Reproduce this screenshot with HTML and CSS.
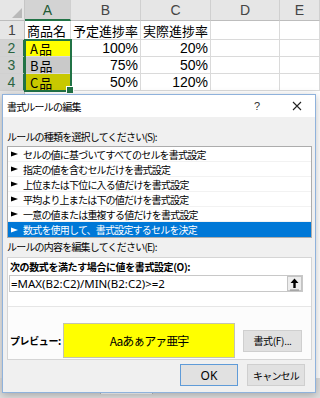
FILE: index.html
```html
<!DOCTYPE html>
<html lang="ja">
<head>
  <meta charset="UTF-8">
  <title>書式ルールの編集</title>
  <link rel="stylesheet" href="styles.css">
</head>
<body>
  <div class="screen">
    <div class="sheet">
      <div class="corner"></div>
      <div class="ch ch-sel">A</div>
      <div class="ch">B</div>
      <div class="ch">C</div>
      <div class="ch">D</div>
      <div class="ch">E</div>

      <div class="rh">1</div>
      <div class="c">商品名</div>
      <div class="c">予定進捗率</div>
      <div class="c">実際進捗率</div>
      <div class="c"></div>
      <div class="c"></div>

      <div class="rh rh-sel">2</div>
      <div class="c yellow">A品</div>
      <div class="c num">100%</div>
      <div class="c num">20%</div>
      <div class="c"></div>
      <div class="c"></div>

      <div class="rh rh-sel">3</div>
      <div class="c gray">B品</div>
      <div class="c num">75%</div>
      <div class="c num">50%</div>
      <div class="c"></div>
      <div class="c"></div>

      <div class="rh rh-sel">4</div>
      <div class="c olive">C品</div>
      <div class="c num">50%</div>
      <div class="c num">120%</div>
      <div class="c"></div>
      <div class="c"></div>

      <div class="selection"></div>
    </div>
    <div class="sheet-rest"></div>
    <div class="tabs">
      <span class="tab">Sheet1</span>
      <span class="tab tab-on">Sheet2</span>
      <span class="tab-add">+</span>
    </div>

    <div class="dialog">
      <div class="titlebar">
        <span class="title">書式ルールの編集</span>
        <span class="help">?</span>
        <span class="close">
          <svg width="10" height="10" viewBox="0 0 10 10"><path d="M1 1L9 9M9 1L1 9" stroke="#222" stroke-width="1.1" fill="none"/></svg>
        </span>
      </div>
      <div class="body">
        <div class="label">ルールの種類を選択してください(S):</div>
        <div class="list">
          <div class="item"><svg class="arrow" width="7" height="6" viewBox="0 0 7 6"><polygon points="0,0.5 7,3 0,5.5"/></svg>セルの値に基づいてすべてのセルを書式設定</div>
          <div class="item"><svg class="arrow" width="7" height="6" viewBox="0 0 7 6"><polygon points="0,0.5 7,3 0,5.5"/></svg>指定の値を含むセルだけを書式設定</div>
          <div class="item"><svg class="arrow" width="7" height="6" viewBox="0 0 7 6"><polygon points="0,0.5 7,3 0,5.5"/></svg>上位または下位に入る値だけを書式設定</div>
          <div class="item"><svg class="arrow" width="7" height="6" viewBox="0 0 7 6"><polygon points="0,0.5 7,3 0,5.5"/></svg>平均より上または下の値だけを書式設定</div>
          <div class="item"><svg class="arrow" width="7" height="6" viewBox="0 0 7 6"><polygon points="0,0.5 7,3 0,5.5"/></svg>一意の値または重複する値だけを書式設定</div>
          <div class="item item-sel"><svg class="arrow" width="7" height="6" viewBox="0 0 7 6"><polygon points="0,0.5 7,3 0,5.5"/></svg>数式を使用して、書式設定するセルを決定</div>
        </div>

        <div class="label label2">ルールの内容を編集してください(E):</div>
        <div class="panel">
          <div class="panel-top">
            <div class="bold-label">次の数式を満たす場合に値を書式設定(O):</div>
            <div class="formula">
              <span class="formula-text">=MAX(B2:C2)/MIN(B2:C2)&gt;=2</span>
              <span class="collapse">
                <svg width="13" height="14" viewBox="0 0 13 14">
                  <path d="M6.5 1.5L2.5 6H5.3V11H7.7V6H10.5Z" fill="#000"/>
                  <path d="M2 13H11" stroke="#888" stroke-width="1"/>
                </svg>
              </span>
            </div>
          </div>
          <div class="panel-bottom">
            <div class="preview-row">
              <span class="bold-label preview-label">プレビュー:</span>
              <div class="preview">Aaあぁアァ亜宇</div>
              <button class="btn btn-format">書式(F)...</button>
            </div>
          </div>
        </div>

        <div class="buttons">
          <button class="btn btn-ok">OK</button>
          <button class="btn">キャンセル</button>
        </div>
      </div>
    </div>
  </div>
</body>
</html>
```

FILE: styles.css
```css
* { box-sizing: border-box; }
body { margin: 0; font-family: "Noto Sans CJK JP", sans-serif; color: #000; }

.screen { position: relative; width: 320px; height: 398px; overflow: hidden; background: #fff; display: flex; flex-direction: column; }

/* spreadsheet */
.sheet { position: relative; display: grid; grid-template-columns: 25px 46px 70px 70px 69px 40px; grid-template-rows: 21px 19px 17px 17px 17px; }
.corner { background: #e6e6e6; border-right: 1px solid #c6c6c6; border-bottom: 1px solid #bdbdbd; position: relative; }
.corner::after { content: ""; position: absolute; right: 2px; bottom: 2px; border-left: 10px solid transparent; border-bottom: 10px solid #b9b9b9; }
.ch { background: #e6e6e6; border-right: 1px solid #d0d0d0; border-bottom: 1px solid #bdbdbd; display: flex; align-items: center; justify-content: center; font-family: "Liberation Sans", sans-serif; font-size: 14px; line-height: 1; color: #444; }
.ch-sel { background: #d3d3d3; border-bottom: 2px solid #217346; color: #1f5a35; }
.rh { background: #e6e6e6; border-right: 1px solid #bdbdbd; border-bottom: 1px solid #d0d0d0; display: flex; align-items: center; justify-content: center; font-family: "Liberation Sans", sans-serif; font-size: 14px; line-height: 1; color: #444; }
.rh-sel { background: #d3d3d3; color: #2a6340; border-right: 2px solid #217346; }
.c { border-right: 1px solid #dadada; border-bottom: 1px solid #dadada; display: flex; align-items: center; padding: 0 2px; font-size: 13px; line-height: 1; white-space: nowrap; }
.num { justify-content: flex-end; font-family: "Liberation Sans", sans-serif; font-size: 14px; }
.yellow { background: #ffff00; padding-left: 5px; letter-spacing: 1px; }
.gray { background: #c9c9c9; padding-left: 5px; letter-spacing: 1px; }
.olive { background: #c8c800; padding-left: 5px; letter-spacing: 1px; }
.selection { position: absolute; grid-area: 3 / 2 / 6 / 3; inset: -1px -1px -1px -1px; border: 2px solid #217346; }
.selection::after { content: ""; position: absolute; right: -4px; bottom: -4px; width: 6px; height: 6px; background: #217346; border: 1px solid #fff; }

.sheet-rest { flex: 1; background: linear-gradient(to right, #e6e6e6 0, #e6e6e6 24px, #bdbdbd 24px, #bdbdbd 25px, #fff 25px); }
.tabs { height: 20px; background: #dedede; display: flex; align-items: flex-start; padding-left: 50px; font-family: "Liberation Sans", sans-serif; font-size: 12px; color: #444; }
.tab { padding: 1px 6px; border-right: 1px solid #bbb; }
.tab-on { background: #fff; color: #217346; font-weight: bold; }
.tab-add { margin-left: 22px; color: #666; }

/* dialog */
.dialog { position: absolute; left: 2px; top: 94px; width: 314px; height: 299px; border: 1px solid #8fb2dc; background: #f0f0f0; box-shadow: 0 2px 8px rgba(0, 0, 0, 0.25); display: flex; flex-direction: column; font-size: 10px; letter-spacing: -0.8px; }
.titlebar { height: 22px; flex: none; background: #fff; display: flex; align-items: center; padding: 0 8px 0 4px; }
.title { flex: 1; }
.help { width: 20px; text-align: center; font-family: "Liberation Sans", sans-serif; font-size: 11px; letter-spacing: 0; color: #333; }
.close { width: 20px; margin-left: 20px; display: flex; justify-content: center; }

.body { flex: 1; display: flex; flex-direction: column; padding: 0 3px 0 4px; }
.label { height: 16px; line-height: 16px; margin-top: 12px; white-space: nowrap; }
.label2 { margin-top: 1px; }
.list { margin-top: 1px; background: #fff; border: 1px solid #acacac; }
.item { height: 15px; display: flex; align-items: center; padding-left: 3px; gap: 5px; white-space: nowrap; border-bottom: 1px solid #f2f2f2; }
.item:last-child { border-bottom: none; }
.arrow { fill: #000; flex: none; }
.item-sel { background: #0078d7; color: #fff; }
.item-sel .arrow { fill: #fff; }

.panel { margin-top: 2px; background: #fff; border: 1px solid #d5d5d5; }
.panel-top { height: 49px; padding: 1px 8px 0 1px; border-bottom: 1px solid #e6e6e6; }
.bold-label { display: block; height: 16px; line-height: 16px; padding-left: 1px; font-weight: bold; letter-spacing: -0.4px; white-space: nowrap; }
.formula { height: 17px; border: 1px solid #c8c8c8; display: flex; align-items: center; justify-content: space-between; padding: 0 0 0 1px; }
.formula-text { font-family: "Noto Sans", sans-serif; font-size: 11.5px; letter-spacing: 0; }
.collapse { width: 15px; height: 15px; background: #ededed; border: 1px solid #c4c4c4; display: flex; align-items: center; justify-content: center; }

.panel-bottom { height: 52px; background: #fcfcfc; padding-top: 16px; }
.preview-row { height: 35px; display: flex; align-items: center; padding-left: 1px; }
.preview-label { width: 54px; }
.preview { width: 172px; height: 35px; background: #ffff00; border: 1px solid #c4c4b0; display: flex; align-items: center; justify-content: center; font-size: 12px; letter-spacing: -1px; }

.btn { font-family: "Noto Sans CJK JP", sans-serif; font-size: 10px; letter-spacing: -0.8px; background: #e1e1e1; border: 1px solid #cfcfcf; height: 22px; padding: 0; color: #000; }
.btn-format { width: 59px; margin-left: 8px; letter-spacing: -0.3px; }
.buttons { display: flex; justify-content: flex-end; gap: 9px; margin-top: 4px; padding-right: 7px; }
.buttons .btn { width: 58px; }
.btn-ok { border: 1px solid #5f9bd8; font-family: "Noto Sans", sans-serif; font-size: 12px; letter-spacing: 0; }
```
